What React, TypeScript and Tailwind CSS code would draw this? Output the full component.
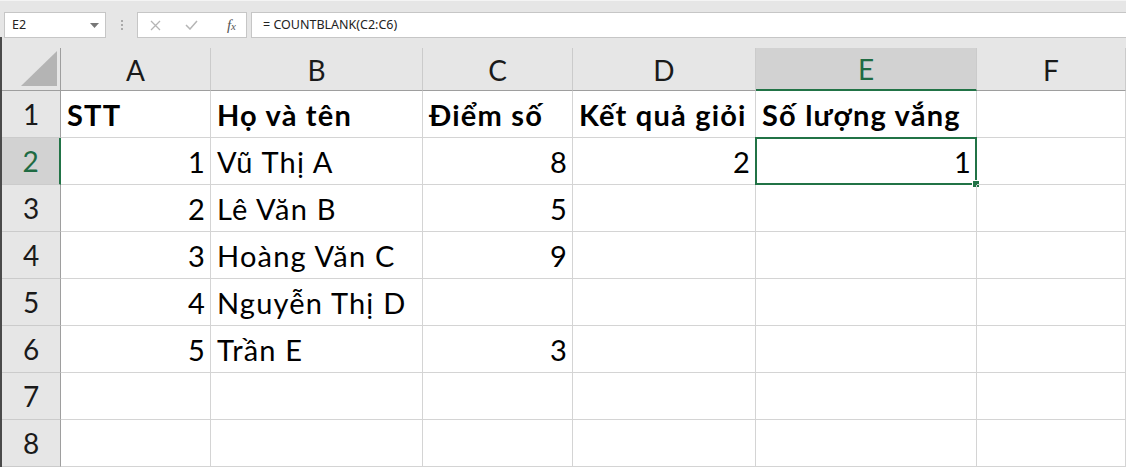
import React from 'react';

const COLS = ['A', 'B', 'C', 'D', 'E', 'F'];

type Cell = { v: string; right?: boolean; bold?: boolean };

const ROWS: Cell[][] = [
  [{ v: 'STT', bold: true }, { v: 'Họ và tên', bold: true }, { v: 'Điểm số', bold: true }, { v: 'Kết quả giỏi', bold: true }, { v: 'Số lượng vắng', bold: true }, { v: '' }],
  [{ v: '1', right: true }, { v: 'Vũ Thị A' }, { v: '8', right: true }, { v: '2', right: true }, { v: '1', right: true }, { v: '' }],
  [{ v: '2', right: true }, { v: 'Lê Văn B' }, { v: '5', right: true }, { v: '' }, { v: '' }, { v: '' }],
  [{ v: '3', right: true }, { v: 'Hoàng Văn C' }, { v: '9', right: true }, { v: '' }, { v: '' }, { v: '' }],
  [{ v: '4', right: true }, { v: 'Nguyễn Thị D' }, { v: '' }, { v: '' }, { v: '' }, { v: '' }],
  [{ v: '5', right: true }, { v: 'Trần E' }, { v: '3', right: true }, { v: '' }, { v: '' }, { v: '' }],
  [{ v: '' }, { v: '' }, { v: '' }, { v: '' }, { v: '' }, { v: '' }],
  [{ v: '' }, { v: '' }, { v: '' }, { v: '' }, { v: '' }, { v: '' }],
];

const cellFont = { fontFamily: 'Lato, "Open Sans", sans-serif' };

function FormulaBar() {
  return (
    <div className="h-[48px] border-t border-[#f4f4f4] flex items-start pt-[11px] pl-[4px]" style={{ fontFamily: '"Noto Sans", "Open Sans", sans-serif' }}>
      {/* name box */}
      <div className="w-[102px] h-[26px] bg-white border border-[#c6c6c6] flex items-center justify-between pl-[7px] pr-[6px] text-[12.5px] text-[#222]">
        <span>E2</span>
        <svg width="9" height="5" viewBox="0 0 9 5"><path d="M0 0h9L4.5 5z" fill="#777" /></svg>
      </div>
      <div className="w-[31px] h-[26px] flex flex-col items-center justify-center gap-[2px]">
        <span className="w-[2px] h-[2px] bg-[#aaa]" />
        <span className="w-[2px] h-[2px] bg-[#aaa]" />
        <span className="w-[2px] h-[2px] bg-[#aaa]" />
      </div>
      {/* fx buttons */}
      <div className="w-[110px] h-[26px] bg-white border border-[#c6c6c6] flex items-center justify-between pl-[12px] pr-[10px]">
        <svg width="11" height="11" viewBox="0 0 11 11"><path d="M1 1l9 9M10 1l-9 9" stroke="#b5b5b5" strokeWidth="1.3" /></svg>
        <svg width="13" height="10" viewBox="0 0 13 10" className="-ml-[4px]"><path d="M1 5l4 4 7-8" stroke="#b5b5b5" strokeWidth="1.5" fill="none" /></svg>
        <span className="text-[15px] italic text-[#555] leading-none" style={{ fontFamily: '"Liberation Serif", serif' }}>f<span className="text-[11px]">x</span></span>
      </div>
      <div className="w-[4px]" />
      {/* formula input */}
      <div className="flex-1 h-[26px] bg-white border border-[#c6c6c6] border-r-0 flex items-center pl-[11px] text-[12.5px] text-[#222]">
        = COUNTBLANK(C2:C6)
      </div>
    </div>
  );
}

export default function App() {
  return (
    <div className="w-[1126px] h-[467px] overflow-hidden bg-[#e6e6e6] select-none">
      <FormulaBar />
      <div className="border-l-2 border-[#4a4a4a] -mt-[11px] pt-[11px]">
        <div className="grid grid-cols-[59px_150px_212px_150px_183px_221px_1fr] grid-rows-[43px_repeat(8,47px)] bg-white" style={cellFont}>
          {/* corner */}
          <div className="bg-[#e6e6e6] border-r border-b border-[#9e9e9e] flex items-end justify-end pr-[3px] pb-[4px]">
            <svg width="36" height="35" viewBox="0 0 36 35"><path d="M36 0V35H0z" fill="#b4b4b4" /></svg>
          </div>
          {COLS.map((c) => (
            <div
              key={c}
              className={`flex items-end justify-center pb-[6px] text-[28px] leading-none border-r border-[#cbcbcb] ${
                c === 'E' ? 'bg-[#d2d2d2] text-[#1f6b43] border-b-2 border-b-[#217346]' : 'bg-[#e6e6e6] text-[#1a1a1a] border-b border-b-[#9e9e9e]'
              }`}
            >
              {c}
            </div>
          ))}
          {ROWS.map((row, ri) => (
            <React.Fragment key={ri}>
              <div
                className={`flex items-end justify-center pb-[9px] text-[28px] leading-none border-b border-[#cbcbcb] ${
                  ri === 1 ? 'bg-[#d2d2d2] text-[#1f6b43] border-r-2 border-r-[#217346]' : 'bg-[#e6e6e6] text-[#1a1a1a] border-r border-r-[#9e9e9e]'
                }`}
              >
                {ri + 1}
              </div>
              {row.map((cell, ci) => (
                <div
                  key={ci}
                  className={`relative flex items-end pb-[8px] text-[29px] leading-none tracking-[1.2px] text-black whitespace-nowrap border-r border-b border-[#d4d4d4] ${
                    cell.right ? 'justify-end pr-[4px]' : 'justify-start pl-[6px]'
                  } ${cell.bold ? 'font-bold' : ''}`}
                >
                  {cell.v}
                  {ri === 1 && ci === 4 && (
                    <div className="absolute -left-px -top-px -right-px -bottom-px border-2 border-[#217346]">
                      <div className="absolute -right-[5px] -bottom-[5px] w-[8px] h-[8px] bg-[#217346] border border-white" />
                    </div>
                  )}
                </div>
              ))}
            </React.Fragment>
          ))}
        </div>
      </div>
    </div>
  );
}
